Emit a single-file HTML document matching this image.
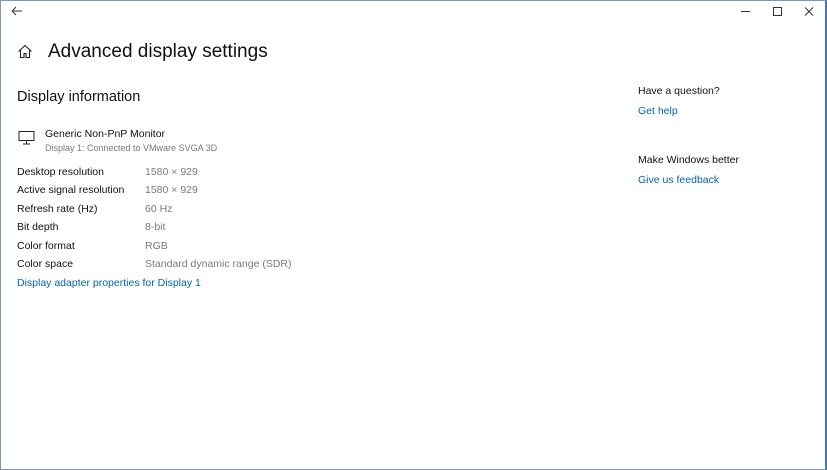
<!DOCTYPE html>
<html><head><style>
body{margin:0;width:827px;height:470px;overflow:hidden;background:#fff;font-family:"Liberation Sans",sans-serif;position:relative}
.win{position:absolute;left:0;top:0;border:1px solid #7a9ab8;border-right:2px solid #3d7ab8;box-sizing:border-box;width:827px;height:470px}
.t{position:absolute;white-space:nowrap;color:#111}
.g{color:#7a7a7a}
.l{color:#0063b1}
.s{font-size:10.5px}
</style></head><body>
<div class="win"></div>
<svg style="position:absolute;left:11px;top:6px" width="12" height="10"><path d="M1 5H11M1 5L5 1M1 5L5 9" stroke="#333" fill="none" stroke-width="1"/></svg>
<svg style="position:absolute;left:737px;top:6px" width="80" height="12"><path d="M4 5.5H13" stroke="#333"/><rect x="36.5" y="1.5" width="8" height="8" stroke="#333" fill="none"/><path d="M68 1.5L76 9.5M76 1.5L68 9.5" stroke="#333"/></svg>
<svg style="position:absolute;left:17px;top:44px" width="16" height="15"><path d="M1.5 7.5L8 1.5L14.5 7.5M3.5 6V13.5H7V9.5H9V13.5H12.5V6" stroke="#222" fill="none" stroke-width="1.1"/></svg>
<div class="t" style="left:48px;top:41px;font-size:19px">Advanced display settings</div>
<div class="t" style="left:17px;top:89px;font-size:14.5px">Display information</div>
<svg style="position:absolute;left:18px;top:131px" width="18" height="14"><rect x="1" y="0.5" width="15" height="9" stroke="#222" fill="none"/><path d="M8.5 10V13M5 13H12" stroke="#222"/></svg>
<div class="t s" style="left:45px;top:128px">Generic Non-PnP Monitor</div>
<div class="t g" style="left:45px;top:143px;font-size:9px">Display 1: Connected to VMware SVGA 3D</div>
<div class="t s" style="left:17px;top:166px">Desktop resolution</div><div class="t s g" style="left:145px;top:166px">1580 × 929</div>
<div class="t s" style="left:17px;top:184px">Active signal resolution</div><div class="t s g" style="left:145px;top:184px">1580 × 929</div>
<div class="t s" style="left:17px;top:203px">Refresh rate (Hz)</div><div class="t s g" style="left:145px;top:203px">60 Hz</div>
<div class="t s" style="left:17px;top:221px">Bit depth</div><div class="t s g" style="left:145px;top:221px">8-bit</div>
<div class="t s" style="left:17px;top:240px">Color format</div><div class="t s g" style="left:145px;top:240px">RGB</div>
<div class="t s" style="left:17px;top:258px">Color space</div><div class="t s g" style="left:145px;top:258px">Standard dynamic range (SDR)</div>
<div class="t s l" style="left:17px;top:277px">Display adapter properties for Display 1</div>
<div class="t s" style="left:638px;top:85px">Have a question?</div>
<div class="t s l" style="left:638px;top:105px">Get help</div>
<div class="t s" style="left:638px;top:154px">Make Windows better</div>
<div class="t s l" style="left:638px;top:174px">Give us feedback</div>
</body></html>
